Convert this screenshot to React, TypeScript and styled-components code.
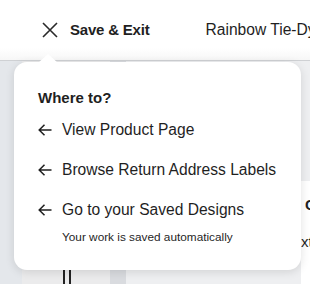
import React from "react";
import styled, { createGlobalStyle } from "styled-components";

const Global = createGlobalStyle`
  html, body { margin: 0; padding: 0; }
  body {
    width: 310px; height: 284px; overflow: hidden;
    font-family: "Liberation Sans", Arial, sans-serif;
    color: #1f1f1f;
    background: #ebecee;
  }
`;

const Page = styled.div`
  position: relative;
  width: 310px;
  height: 284px;
  display: flex;
  flex-direction: column;
  overflow: hidden;
`;

const Header = styled.header`
  height: 61px;
  flex: none;
  box-sizing: border-box;
  display: flex;
  align-items: center;
  padding: 0 0 1px 42px;
  background: linear-gradient(to bottom, #ffffff 0, #ffffff 48px, #f6f6f6 61px);
  border-bottom: 1px solid #cfd1d4;
  white-space: nowrap;
`;

const ExitButton = styled.button`
  display: flex;
  align-items: center;
  gap: 12px;
  border: 0;
  background: none;
  padding: 0;
  font: 700 15px "Liberation Sans", Arial, sans-serif;
  letter-spacing: -0.2px;
  color: #1f1f1f;
  cursor: pointer;
`;

const Title = styled.span`
  margin-left: 56px;
  font-size: 15.6px;
  color: #1f1f1f;
`;

const Workspace = styled.div`
  flex: 1;
  display: flex;
`;

const Rail = styled.div`
  width: 22px;
  background: #e4e7eb;
`;

const SidePanel = styled.div`
  width: 88px;
  background: #ebebec;
  display: flex;
  justify-content: center;
  align-items: flex-end;
  padding-left: 1px;
  box-sizing: border-box;
`;

const Gutter = styled.div`
  width: 16px;
  background: #d9dbdf;
`;

const Canvas = styled.div`
  flex: 1;
  background: #eeeff1;
  display: flex;
  justify-content: flex-end;
  padding-top: 120px;
`;

const RightCard = styled.div`
  width: 9px;
  height: 92px;
  background: #ffffff;
  overflow: hidden;
  display: flex;
  flex-direction: column;
  gap: 20px;
  padding-top: 15px;
  font-size: 15px;
  white-space: nowrap;
`;

const CardHeading = styled.span`
  font-weight: 700;
  margin-left: 4px;
`;

const ToolGlyph = styled.div`
  width: 4px;
  height: 18px;
  border: 2px solid #222;
  border-radius: 1px;
  margin-bottom: 1px;
`;

const Popover = styled.div`
  position: absolute;
  left: 14px;
  top: 62px;
  width: 287px;
  height: 208px;
  box-sizing: border-box;
  background: #fff;
  border-radius: 13px;
  box-shadow: 0 2px 10px rgba(0, 0, 0, 0.12);
  padding: 27px 0 0 24px;
  display: flex;
  flex-direction: column;

  &::before {
    content: "";
    position: absolute;
    left: 24px;
    top: -8px;
    width: 0;
    height: 0;
    border-left: 10px solid transparent;
    border-right: 10px solid transparent;
    border-bottom: 9px solid #fff;
  }
`;

const Heading = styled.div`
  font-weight: 700;
  font-size: 15px;
  line-height: 18px;
  margin-bottom: 14px;
`;

const Option = styled.a<{ $gap?: number }>`
  display: flex;
  align-items: center;
  gap: 10px;
  height: 18px;
  font-size: 15.6px;
  color: #1f1f1f;
  text-decoration: none;
  margin-bottom: ${(p) => p.$gap ?? 22}px;
  white-space: nowrap;
`;

const Note = styled.div`
  margin-left: 24px;
  font-size: 11.8px;
  color: #1f1f1f;
  line-height: 14px;
`;

const CloseIcon = () => (
  <svg width="16" height="16" viewBox="0 0 16 16">
    <path d="M1 1 L15 15 M15 1 L1 15" stroke="#2a2a2a" strokeWidth="1.6" fill="none" />
  </svg>
);

const ArrowLeft = () => (
  <svg width="14" height="12" viewBox="0 0 14 12">
    <path d="M13.5 6 H1 M6.5 0.7 L1.2 6 L6.5 11.3" stroke="#1f1f1f" strokeWidth="1.5" fill="none" />
  </svg>
);

export default function App() {
  return (
    <Page>
      <Global />
      <Header>
        <ExitButton>
          <CloseIcon />
          Save &amp; Exit
        </ExitButton>
        <Title>Rainbow Tie-Dye Return Address Labels</Title>
      </Header>
      <Workspace>
        <Rail />
        <SidePanel>
          <ToolGlyph />
        </SidePanel>
        <Gutter />
        <Canvas>
          <RightCard>
            <CardHeading>Co</CardHeading>
            <span>xt</span>
          </RightCard>
        </Canvas>
      </Workspace>
      <Popover>
        <Heading>Where to?</Heading>
        <Option href="#">
          <ArrowLeft />
          View Product Page
        </Option>
        <Option href="#">
          <ArrowLeft />
          Browse Return Address Labels
        </Option>
        <Option href="#" $gap={11}>
          <ArrowLeft />
          Go to your Saved Designs
        </Option>
        <Note>Your work is saved automatically</Note>
      </Popover>
    </Page>
  );
}
